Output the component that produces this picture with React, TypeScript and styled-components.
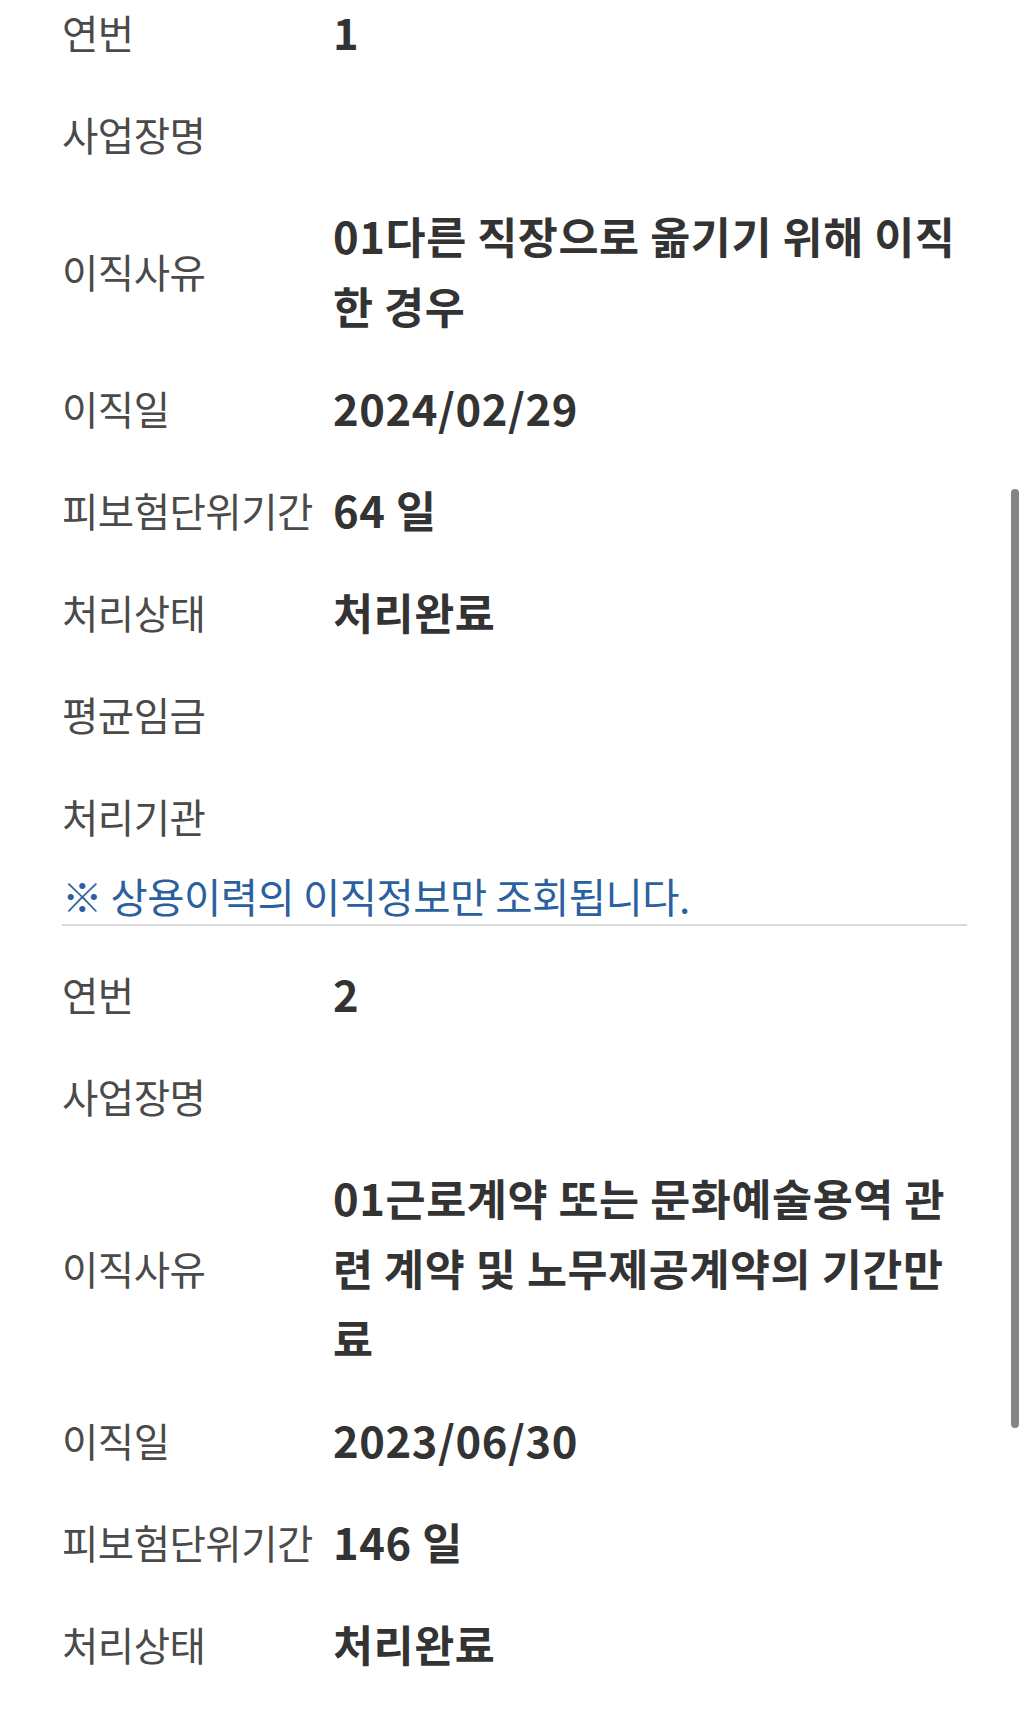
import React from "react";
import styled, { createGlobalStyle } from "styled-components";

const GlobalStyle = createGlobalStyle`
  html, body {
    margin: 0;
    padding: 0;
    background: #ffffff;
    overflow: hidden;
  }
  body {
    font-family: "Noto Sans CJK KR", "Noto Sans", sans-serif;
  }
`;

const Page = styled.div`
  position: relative;
  width: 1025px;
  height: 1711px;
  overflow: hidden;
  background: #ffffff;
`;

const Content = styled.div`
  margin-top: -19px;
  padding: 0 60px 0 62px;
  display: flex;
  flex-direction: column;
`;

const Section = styled.section<{ $first?: boolean }>`
  display: flex;
  flex-direction: column;
  padding-top: ${(p) => (p.$first ? "0" : "17px")};
`;

const Row = styled.div`
  display: grid;
  grid-template-columns: 271px 1fr;
  align-items: center;
  padding: 16px 0;
`;

const Label = styled.div`
  font-size: 39.5px;
  line-height: 70px;
  font-weight: 400;
  color: #4a4a4a;
  white-space: nowrap;
  letter-spacing: -0.5px;
`;

const Value = styled.div`
  font-size: 43.5px;
  line-height: 70px;
  font-weight: 700;
  color: #333333;
  white-space: pre-line;
  letter-spacing: 0.6px;
  min-height: 70px;
`;

const Notice = styled.p`
  margin: 0;
  padding: 5px 0 4px;
  font-size: 40.5px;
  line-height: 48px;
  color: #2b60a0;
  letter-spacing: -0.5px;
  white-space: nowrap;
`;

const Divider = styled.hr`
  margin: 0;
  border: 0;
  height: 2px;
  background: #d9d9d9;
  width: 905px;
`;

const Scrollbar = styled.div`
  position: absolute;
  right: 6px;
  top: 489px;
  width: 8px;
  height: 939px;
  border-radius: 4px;
  background: #858585;
`;

type Item = { label: string; value: string };

const first: Item[] = [
  { label: "연번", value: "1" },
  { label: "사업장명", value: "" },
  { label: "이직사유", value: "01다른 직장으로 옮기기 위해 이직\n한 경우" },
  { label: "이직일", value: "2024/02/29" },
  { label: "피보험단위기간", value: "64 일" },
  { label: "처리상태", value: "처리완료" },
  { label: "평균임금", value: "" },
  { label: "처리기관", value: "" },
];

const second: Item[] = [
  { label: "연번", value: "2" },
  { label: "사업장명", value: "" },
  {
    label: "이직사유",
    value: "01근로계약 또는 문화예술용역 관\n련 계약 및 노무제공계약의 기간만\n료",
  },
  { label: "이직일", value: "2023/06/30" },
  { label: "피보험단위기간", value: "146 일" },
  { label: "처리상태", value: "처리완료" },
];

const Rows = ({ items }: { items: Item[] }) => (
  <>
    {items.map((it, i) => (
      <Row key={i}>
        <Label>{it.label}</Label>
        <Value>{it.value}</Value>
      </Row>
    ))}
  </>
);

export default function App() {
  return (
    <Page>
      <GlobalStyle />
      <Content>
        <Section $first>
          <Rows items={first} />
          <Notice>※ 상용이력의 이직정보만 조회됩니다.</Notice>
          <Divider />
        </Section>
        <Section>
          <Rows items={second} />
        </Section>
      </Content>
      <Scrollbar />
    </Page>
  );
}
